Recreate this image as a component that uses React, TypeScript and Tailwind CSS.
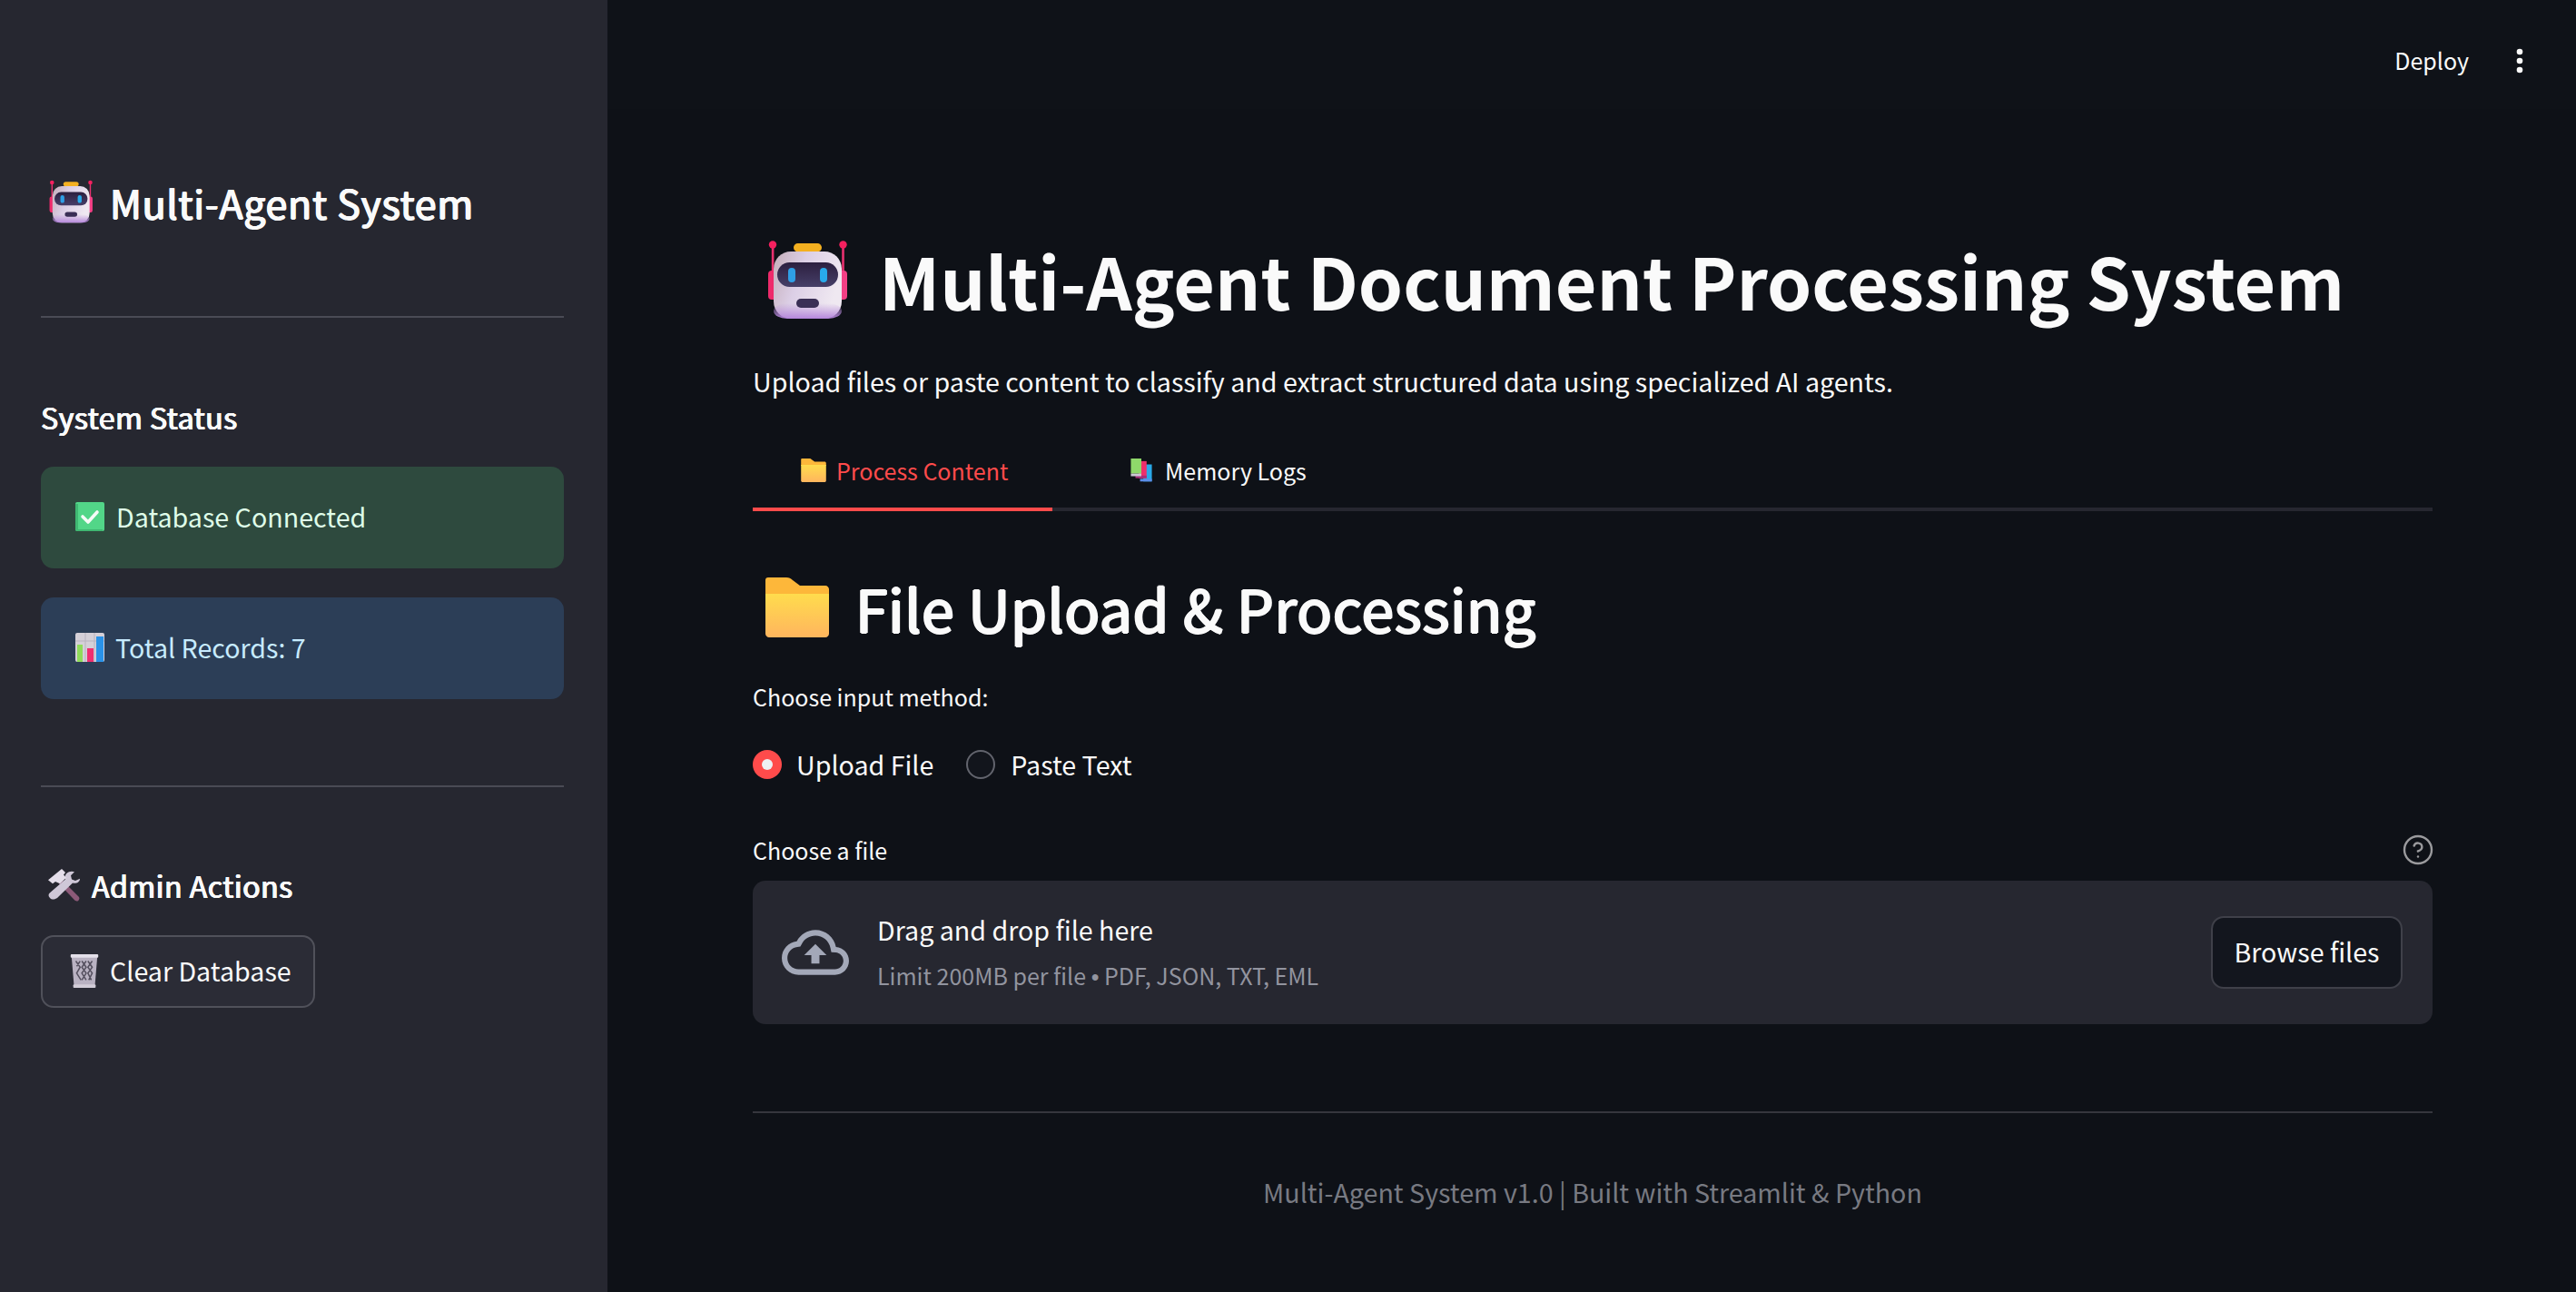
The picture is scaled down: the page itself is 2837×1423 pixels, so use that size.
import { CircleHelp } from "lucide-react";

const RobotIcon = ({ className }: { className: string }) => (
    <svg viewBox="0 0 90 90" className={className}>
        <defs>
            <linearGradient id="robotBody" x1="0" y1="0" x2="1" y2="0.35">
                <stop offset="0" stopColor="#c4adb9" />
                <stop offset="0.45" stopColor="#dccfe6" />
                <stop offset="1" stopColor="#efe8f1" />
            </linearGradient>
            <linearGradient id="robotVisor" x1="0" y1="0" x2="0" y2="1">
                <stop offset="0" stopColor="#2c1f3f" />
                <stop offset="1" stopColor="#463f68" />
            </linearGradient>
            <linearGradient id="robotChin" x1="0" y1="0" x2="0" y2="1">
                <stop offset="0" stopColor="#b98fd8" stopOpacity="0" />
                <stop offset="1" stopColor="#b586dc" />
            </linearGradient>
        </defs>
        <rect x="4.8" y="5" width="2.6" height="32" fill="#e8316f" />
        <rect x="82.2" y="5" width="2.6" height="32" fill="#e8316f" />
        <circle cx="6" cy="5.5" r="4.2" fill="#f5205f" />
        <circle cx="83.5" cy="5.5" r="4.2" fill="#f5205f" />
        <rect x="1" y="34" width="10" height="32" rx="4" fill="#ee2a6b" />
        <rect x="78" y="34" width="10" height="32" rx="4" fill="#f43f85" />
        <rect x="29" y="4" width="31" height="9.5" rx="4.7" fill="#f4b020" />
        <rect x="7" y="13" width="75" height="74" rx="19" fill="url(#robotBody)" />
        <rect x="7" y="70" width="75" height="17" rx="15" fill="url(#robotChin)" />
        <rect x="11" y="25" width="67" height="27" rx="13.5" fill="url(#robotVisor)" />
        <rect x="23" y="31" width="8" height="16" rx="4" fill="#2f9fe6" />
        <rect x="58" y="31" width="8" height="16" rx="4" fill="#28aaea" />
        <rect x="32" y="65" width="25" height="10" rx="5" fill="#3a2f55" />
    </svg>
);

const FolderIcon = ({ className }: { className: string }) => (
    <svg viewBox="0 0 70 66" className={className}>
        <defs>
            <linearGradient id="folderFront" x1="0" y1="0" x2="0" y2="1">
                <stop offset="0" stopColor="#ffdc4d" />
                <stop offset="1" stopColor="#ffb55e" />
            </linearGradient>
        </defs>
        <path d="M3 0h20c3 0 5 1 7 3l8 6h28c2 0 4 2 4 4v7H0V3c0-2 1-3 3-3z" fill="#fdb73a" />
        <path d="M0 18h70v44c0 2-2 4-4 4H4c-2 0-4-2-4-4z" fill="url(#folderFront)" />
    </svg>
);

const BooksIcon = ({ className }: { className: string }) => (
    <svg viewBox="0 0 32 36" className={className}>
        <rect x="19" y="9" width="13" height="26" fill="#29a9e8" />
        <rect x="14" y="31" width="18" height="4" fill="#5b8de8" />
        <rect x="12" y="4" width="12" height="26" fill="#ee2f6b" />
        <rect x="7" y="26" width="17" height="4" fill="#a52f7a" />
        <rect x="0" y="0" width="16" height="23" fill="#8fd86a" />
        <rect x="0" y="23" width="16" height="4" fill="#cbc7d4" />
    </svg>
);

const CheckIcon = ({ className }: { className: string }) => (
    <svg viewBox="0 0 32 32" className={className}>
        <rect width="32" height="32" rx="2" fill="#52d688" />
        <path d="M0 2v28c0 1 1 2 2 2h28v-2H3V2z" fill="#3fb872" />
        <path d="M8 16l6 6 10-11" fill="none" stroke="#f5fbf7" strokeWidth="3.6" strokeLinecap="round" strokeLinejoin="round" />
    </svg>
);

const ChartIcon = ({ className }: { className: string }) => (
    <svg viewBox="0 0 32 32" className={className}>
        <rect width="32" height="32" rx="2" fill="#d5d0d8" />
        <path d="M0 9h32M11 0v32M21 0v32" stroke="#b9b3bf" strokeWidth="1" />
        <rect x="2" y="13" width="6" height="19" fill="#8fdc5a" />
        <rect x="13" y="17" width="7" height="15" fill="#f02f70" />
        <rect x="23" y="4" width="8" height="28" fill="#2a92e8" />
    </svg>
);

const ToolsIcon = ({ className }: { className: string }) => (
    <svg viewBox="0 0 36 44" preserveAspectRatio="none" className={className}>
        <path d="M13 20l4-4 18 22c1 2 0 4-1 5-2 1-3 0-4-1z" fill="#8c5a78" />
        <path d="M24 4c-4 2-5 6-4 10L3 32c-2 2-2 5 0 7 2 3 6 2 8 0l17-20c4 1 8-1 8-6l-5 3-4-2-1-5 4-5c-2-1-4-1-6 0z" fill="#cfc8d8" />
        <path d="M1 15L16 0l4 5-2 3 3 4-7 8-5-3-3 3z" fill="#e4deea" />
    </svg>
);

const TrashIcon = ({ className }: { className: string }) => (
    <svg viewBox="0 0 32 40" className={className}>
        <path d="M1 3h30l-3 36H4z" fill="#b9b2c2" />
        <path d="M6 9l5 7-4 7 5 8M13 9l5 7-5 7 5 8M20 9l5 7-5 7 4 8M11 9l-4 6M18 9l-5 7 5 7-5 8M25 9l-5 7 5 7-4 8" fill="none" stroke="#55505f" strokeWidth="1.6" />
        <rect x="0" y="1" width="32" height="4" rx="1" fill="#e4e0ea" />
        <rect x="3" y="36" width="26" height="4" rx="1" fill="#d2cdd8" />
    </svg>
);

function Divider({ className }: { className: string }) {
    return <div className={`border-t-2 border-[#4a4b55] ${className}`} />;
}

function Sidebar() {
    return (
        <aside className="flex w-[669px] shrink-0 flex-col bg-[#262730] pl-[45px] pr-[48px]">
            <div className="mt-[192px] flex h-[60px] items-center text-[43px] leading-[60px] tracking-[0.7px] text-[#fafafa] [text-shadow:0.8px_0_0_#fafafa,-0.8px_0_0_#fafafa,0_0.5px_0_#fafafa,0_-0.5px_0_#fafafa]">
                <RobotIcon className="ml-[9px] mr-[18px] h-[49px] w-[49px]" />
                <span>Multi-Agent System</span>
            </div>
            <Divider className="mt-[96px]" />
            <div className="mt-[89px] h-[40px] text-[32.2px] leading-[40px] tracking-[0.45px] text-[#fafafa] [text-shadow:0.6px_0_0_#fafafa,-0.6px_0_0_#fafafa,0_0.4px_0_#fafafa,0_-0.4px_0_#fafafa]">System Status</div>
            <div className="mt-[35px] flex h-[112px] items-center rounded-[14px] bg-[#2e4a3e] pb-[2px] pl-[38px] text-[28.64px] text-[#dffde9]">
                <CheckIcon className="mr-[13px] h-[32px] w-[32px]" />
                <span>Database Connected</span>
            </div>
            <div className="mt-[32px] flex h-[112px] items-center rounded-[14px] bg-[#2c3e57] pb-[2px] pl-[38px] text-[28.64px] text-[#c7ebff]">
                <ChartIcon className="mr-[12px] h-[32px] w-[32px]" />
                <span>Total Records: 7</span>
            </div>
            <Divider className="mt-[95px]" />
            <div className="mt-[86px] flex h-[44px] items-center text-[32.2px] leading-[44px] tracking-[0.45px] text-[#fafafa] [text-shadow:0.6px_0_0_#fafafa,-0.6px_0_0_#fafafa,0_0.4px_0_#fafafa,0_-0.4px_0_#fafafa]">
                <ToolsIcon className="ml-[7px] mr-[13px] h-[36px] w-[36px]" />
                <span>Admin Actions</span>
            </div>
            <button className="mt-[33px] flex h-[80px] w-[302px] items-center rounded-[14px] border-2 border-[#50515a] bg-[#2b2c36] pb-[2px] pl-[30px] text-[28.64px] text-[#fafafa]">
                <TrashIcon className="mr-[12px] h-[38px] w-[32px]" />
                <span>Clear Database</span>
            </button>
        </aside>
    );
}

function Main() {
    return (
        <main className="flex min-w-0 flex-1 flex-col bg-[#0e1117]">
            <header className="flex h-[120px] shrink-0 items-start justify-end bg-[#0f1218] pr-[58px] pt-[46px]">
                <span className="text-[25px] leading-[40px] text-[#fafafa]">Deploy</span>
                <svg viewBox="0 0 8 28" className="ml-[52px] mt-[7px] h-[28px] w-[8px]" fill="#fafafa">
                    <circle cx="4" cy="4" r="3.3" />
                    <circle cx="4" cy="14" r="3.3" />
                    <circle cx="4" cy="24" r="3.3" />
                </svg>
            </header>
            <div className="ml-[160px] mr-[158px] flex flex-col">
                <h1 className="mt-[139px] flex h-[100px] items-center text-[78.76px] font-bold leading-[100px] text-[#fafafa]">
                    <RobotIcon className="ml-[16px] mr-[33px] h-[90px] w-[90px]" />
                    <span className="pb-[2px]">Multi-Agent Document Processing System</span>
                </h1>
                <p className="mt-[41px] h-[40px] text-[28.64px] leading-[40px] text-[#fafafa]">
                    Upload files or paste content to classify and extract structured data using specialized AI agents.
                </p>
                <div className="mt-[58px] flex h-[40px] items-center text-[25px] leading-[40px]">
                    <div className="flex w-[330px] items-center pl-[53px] text-[#ff4b4b]">
                        <FolderIcon className="mr-[11px] h-[26px] w-[28px]" />
                        <span>Process Content</span>
                    </div>
                    <div className="ml-[84px] flex items-center text-[#fafafa]">
                        <BooksIcon className="mr-[12px] h-[26px] w-[28px]" />
                        <span>Memory Logs</span>
                    </div>
                </div>
                <div className="relative mt-[21px] h-[4px] bg-[#262730]">
                    <div className="absolute inset-y-0 left-0 w-[330px] bg-[#ff4b4b]" />
                </div>
                <h2 className="mt-[68px] flex h-[76px] items-center text-[64.4px] leading-[76px] tracking-[0.5px] text-[#fafafa] [text-shadow:1.2px_0_0_#fafafa,-1.2px_0_0_#fafafa,0_0.7px_0_#fafafa,0_-0.7px_0_#fafafa]">
                    <FolderIcon className="ml-[14px] mr-[29px] h-[66px] w-[70px]" />
                    <span>File Upload &amp; Processing</span>
                </h2>
                <label className="mt-[42px] h-[36px] text-[25px] leading-[36px] text-[#fafafa]">Choose input method:</label>
                <div className="mt-[37px] flex h-[40px] items-center text-[28.64px] leading-[40px] text-[#fafafa]">
                    <span className="flex h-[32px] w-[32px] items-center justify-center rounded-full bg-[#ff4b4b]">
                        <span className="h-[12px] w-[12px] rounded-full bg-[#eef0f4]" />
                    </span>
                    <span className="ml-[16px]">Upload File</span>
                    <span className="ml-[36px] h-[32px] w-[32px] rounded-full border-2 border-[#62646d] bg-[#12151c]" />
                    <span className="ml-[17px]">Paste Text</span>
                </div>
                <div className="mt-[56px] flex h-[36px] items-center justify-between text-[25px] leading-[36px] text-[#fafafa]">
                    <label>Choose a file</label>
                    <CircleHelp className="-mr-[2px] h-[36px] w-[36px] text-[#9a9a9d]" strokeWidth={1.6} />
                </div>
                <div className="mt-[16px] flex h-[158px] items-center rounded-[14px] bg-[#262730] pl-[32px] pr-[33px]">
                    <svg viewBox="0 0 24 24" className="h-[74px] w-[74px]" fill="#a3a8b8">
                        <path d="M19.35 10.04C18.67 6.59 15.64 4 12 4 9.11 4 6.6 5.64 5.35 8.04 2.34 8.36 0 10.91 0 14c0 3.31 2.69 6 6 6h13c2.76 0 5-2.24 5-5 0-2.64-2.05-4.78-4.65-4.96zM19 18H6c-2.21 0-4-1.79-4-4 0-2.05 1.53-3.76 3.56-3.97l1.07-.11.5-.95C8.08 7.14 9.94 6 12 6c2.62 0 4.88 1.86 5.39 4.43l.3 1.5 1.53.11c1.56.1 2.78 1.41 2.78 2.96 0 1.65-1.35 3-3 3zM8 13h2.55v3h2.9v-3H16l-4-4z" />
                    </svg>
                    <div className="ml-[31px] flex flex-1 flex-col">
                        <span className="text-[28.64px] leading-[40px] text-[#fafafa]">Drag and drop file here</span>
                        <span className="mt-[12px] text-[25px] leading-[36px] text-[#92949f]">
                            Limit 200MB per file <span className="font-['Liberation_Sans']">•</span> PDF, JSON, TXT, EML
                        </span>
                    </div>
                    <button className="h-[80px] w-[211px] rounded-[14px] border-2 border-[#3f4049] bg-[#13161e] pb-[2px] text-[28.64px] text-[#fafafa]">Browse files</button>
                </div>
                <div className="mt-[96px] border-t-2 border-[#35363d]" />
                <p className="mt-[67px] text-center text-[28.64px] leading-[40px] text-[#787a82]">Multi-Agent System v1.0 | Built with Streamlit &amp; Python</p>
            </div>
        </main>
    );
}

export default function App() {
    return (
        <div className="flex h-screen w-full overflow-hidden font-['Noto_Sans_CJK_SC','Liberation_Sans',sans-serif]">
            <Sidebar />
            <Main />
        </div>
    );
}
